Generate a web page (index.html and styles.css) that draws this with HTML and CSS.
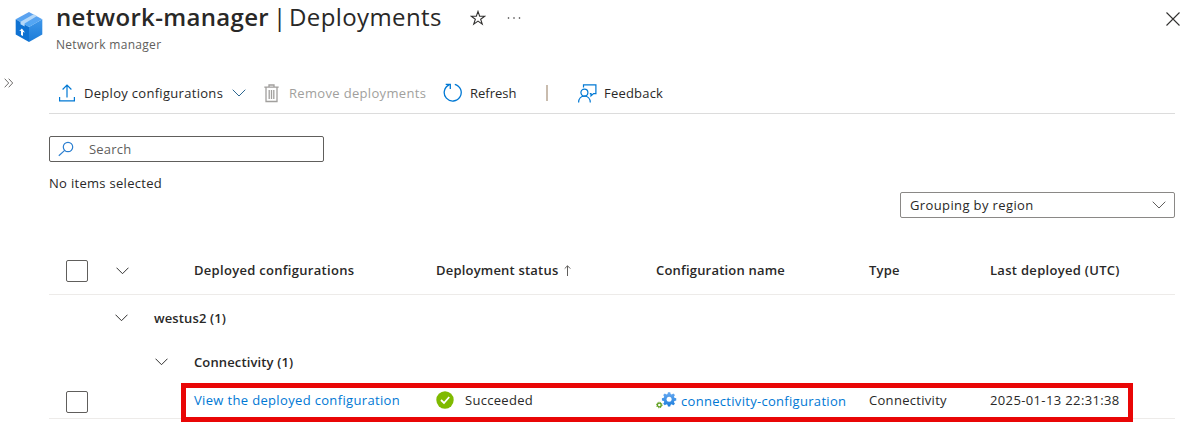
FILE: index.html
```
<!DOCTYPE html>
<html lang="en">
<head>
<meta charset="utf-8">
<title>network-manager | Deployments</title>
<link rel="stylesheet" href="styles.css">
</head>
<body>
<header class="header">
  <svg class="logo" width="28" height="32" viewBox="0 0 28 32">
    <defs>
      <linearGradient id="side" x1="0" y1="0" x2="0" y2="1"><stop offset="0" stop-color="#3f97ea"/><stop offset="1" stop-color="#1a7bd8"/></linearGradient>
      <linearGradient id="top" x1="0" y1="0" x2="0" y2="1"><stop offset="0" stop-color="#5ea0ef"/><stop offset="1" stop-color="#4fa8f5"/></linearGradient>
    </defs>
    <path fill="url(#top)" d="M14 1 27.300 8.300 14 16 .7 8.300z"/>
    <path fill="#0f72d2" d="M.7 8.300 14 16v15L.7 23.600z"/>
    <path fill="url(#side)" d="M27.300 8.300V23.600L14 31V16z"/>
    <path fill="#b5d8f8" d="m5.500 10.800 13.200-7.600 3.300 1.900-12.400 7.400v3l-4.100-2.300z"/>
    <path fill="#fff" d="m6.900 17.600 3 4-1.900-.7v4.100l-2-1.100v-4.100l-1.800.2z"/>
  </svg>
  <div class="heading">
    <div class="title-row">
      <h1 class="title"><span class="resource">network-manager</span><span class="bar">|</span><span class="page">Deployments</span></h1>
      <svg class="star" width="16" height="16" viewBox="0 0 16 16"><path fill="none" stroke="#323130" stroke-width="1.100" d="m8 1.400 1.650 4.800h5.100l-4.100 3 1.600 4.900L8 11.100l-4.250 3 1.600-4.900-4.100-3h5.100z"/></svg>
      <svg class="more" width="14" height="4" viewBox="0 0 14 4"><g fill="#323130"><circle cx="1.500" cy="2" r=".8"/><circle cx="7" cy="2" r=".8"/><circle cx="12.500" cy="2" r=".8"/></g></svg>
    </div>
    <div class="subtitle">Network manager</div>
  </div>
  <svg class="close" width="14" height="14" viewBox="0 0 14 14"><path stroke="#323130" stroke-width="1.100" d="m.5.5 13 13m0-13-13 13"/></svg>
</header>
<div class="body">
  <aside class="rail"><svg width="10" height="10" viewBox="0 0 10 10"><path fill="none" stroke="#605e5c" stroke-width=".9" d="m.7.7 4 4.300-4 4.300m4-8.600 4 4.300-4 4.300"/></svg></aside>
  <main class="main">
    <nav class="toolbar">
      <div class="command deploy">
        <svg width="16" height="18" viewBox="0 0 16 18"><path fill="none" stroke="#0078d4" stroke-width="1.200" d="M8 13.500V1.200M3.600 5.500 8 1.100l4.400 4.400M.6 13v3.800h14.800V13"/></svg>
        <span class="label">Deploy configurations</span>
        <svg class="chev" width="14" height="8" viewBox="0 0 14 8"><path fill="none" stroke="#2c6690" d="M.7.7 7 7 13.300.7"/></svg>
      </div>
      <div class="command remove">
        <svg width="15" height="19" viewBox="0 0 15 19"><path fill="none" stroke="#a19f9d" stroke-width="1.300" d="M.3 3.200h14.400M5 3V1h5v2M2 3.500v14h11v-14M5.200 6v9M7.500 6v9M9.800 6v9"/></svg>
        <span class="label">Remove deployments</span>
      </div>
      <div class="command refresh">
        <svg width="20" height="20" viewBox="0 0 20 20"><path fill="none" stroke="#0078d4" stroke-width="1.300" d="M11.800 1.300A8.500 8.500 0 1 1 6.200 1.800M2.700 1.300h4.600v4.600"/></svg>
        <span class="label">Refresh</span>
      </div>
      <span class="separator"></span>
      <div class="command feedback">
        <svg width="19" height="19" viewBox="0 0 19 19"><path fill="none" stroke="#0078d4" stroke-width="1.200" d="M5.500 3.500V.8h12.400v8.800h-2.300l-2.600 2.300V9.600h-1.200"/><circle cx="6.400" cy="8.600" r="3.500" fill="#fff" stroke="#0078d4" stroke-width="1.200"/><path fill="none" stroke="#0078d4" stroke-width="1.200" d="M.6 18.400c0-3.700 2.400-6.200 5.800-6.200s5.900 2.500 5.900 6.200"/></svg>
        <span class="label">Feedback</span>
      </div>
    </nav>
    <div class="search">
      <svg width="16" height="16" viewBox="0 0 16 16"><g fill="none" stroke="#2b7fd0" stroke-width="1.200"><circle cx="10" cy="6" r="4.700"/><path d="M6.700 9.400.8 14.700"/></g></svg>
      <span class="placeholder">Search</span>
    </div>
    <div class="selection">No items selected</div>
    <div class="grouping"><span class="grouping-label">Grouping by region</span><svg width="14" height="8" viewBox="0 0 14 8"><path fill="none" stroke="#605e5c" d="M.7.7 7 7 13.300.7"/></svg></div>
    <section class="table">
      <div class="row head">
        <span class="check"></span>
        <span><svg class="chev" width="13" height="8" viewBox="0 0 13 8"><path fill="none" stroke="#323130" d="M.5.700 6.500 6.700 12.500.7"/></svg></span>
        <span class="h-name">Deployed configurations</span>
        <span class="cell"><span class="h-status">Deployment status</span><svg class="sort" width="7" height="11" viewBox="0 0 7 11"><path fill="none" stroke="#605e5c" d="M3.500 11V.8M.7 3.600 3.500.8l2.800 2.800"/></svg></span>
        <span class="h-config">Configuration name</span>
        <span class="h-type">Type</span>
        <span class="h-date">Last deployed (UTC)</span>
      </div>
      <div class="group region">
        <svg width="13" height="8" viewBox="0 0 13 8"><path fill="none" stroke="#323130" d="M.5.700 6.500 6.700 12.500.7"/></svg>
        <span class="g-region">westus2 (1)</span>
      </div>
      <div class="group kind">
        <svg width="13" height="8" viewBox="0 0 13 8"><path fill="none" stroke="#323130" d="M.5.700 6.500 6.700 12.500.7"/></svg>
        <span class="g-kind">Connectivity (1)</span>
      </div>
      <div class="row data">
        <span class="check"></span>
        <span></span>
        <a class="link d-name">View the deployed configuration</a>
        <span class="cell status"><svg width="18" height="18" viewBox="0 0 18 18"><circle cx="9" cy="9" r="8.700" fill="#7fba00"/><path fill="none" stroke="#fff" stroke-width="1.800" d="m5 9 3 3 5.200-6"/></svg><span class="d-status">Succeeded</span></span>
        <span class="cell config">
          <svg width="21" height="18" viewBox="0 0 21 18">
            <defs><linearGradient id="gear" x1="0" y1="0" x2="0" y2="1"><stop offset="0" stop-color="#6aabf2"/><stop offset="1" stop-color="#1b7ddb"/></linearGradient></defs>
            <g fill="url(#gear)" transform="translate(.9 .2) scale(.93)"><path d="M11.900 0h2.400l.5 2 1.100.5 1.800-1.100 1.700 1.700-1.100 1.800.5 1.100 2 .5v2.400l-2 .5-.5 1.100 1.100 1.800-1.700 1.700-1.800-1.100-1.100.5-.5 1.900h-2.400l-.5-1.900-1.100-.5L8.500 14l-1.700-1.700 1.100-1.800-.5-1.100-2-.5V6.500l2-.5.5-1.100-1.100-1.800 1.700-1.700 1.800 1.100 1.100-.5z"/></g>
            <circle cx="13.100" cy="7.200" r="2.500" fill="#fff"/>
            <circle cx="3.300" cy="13" r="3.700" fill="#fff"/>
            <circle cx="3.300" cy="13" r="1.900" fill="none" stroke="#5e9e1d" stroke-width="1.300"/>
            <circle cx="3.300" cy="13" r="2.800" fill="none" stroke="#5e9e1d" stroke-width="1" stroke-dasharray="1.100 1.100"/>
          </svg><a class="link d-config">connectivity-configuration</a></span>
        <span class="d-type">Connectivity</span>
        <span class="d-date">2025-01-13 22:31:38</span>
        <span class="highlight"></span>
      </div>
    </section>
  </main>
</div>
</body>
</html>
```
FILE: styles.css
```
* { box-sizing: border-box; }
body { margin: 0; width: 1187px; height: 434px; overflow: hidden; background: #fff; color: #292827; font: 13px/20px "Open Sans", "Noto Sans", sans-serif; white-space: nowrap; letter-spacing: .3px; }
svg { display: block; flex: none; }
.header { display: flex; align-items: flex-start; height: 73px; padding-right: 7px; }
.logo { margin: 11px 13px 0 15px; }
.heading { flex: 1; }
.title-row { display: flex; height: 36px; }
.title { display: flex; margin: 0; font-size: 24px; line-height: 34px; font-weight: 400; letter-spacing: .4px; }
.resource { width: 217px; font-weight: 600; letter-spacing: .33px; }
.bar { width: 16px; }
.page { width: 181px; }
.star { margin-top: 10px; }
.more { margin: 16px 0 0 21px; }
.subtitle { font-size: 12px; line-height: 18px; color: #605e5c; }
.close { margin-top: 12px; }
.body { display: flex; }
.rail { width: 49px; padding: 5px 0 0 4px; }
.main { width: 1126px; }
.toolbar { display: flex; align-items: center; height: 41px; border-bottom: 1px solid #dcdcdc; }
.command { display: flex; align-items: center; }
.deploy { width: 215px; padding-left: 10px; }
.deploy .label { margin-left: 9px; width: 148px; }
.remove { width: 179px; color: #a19f9d; }
.remove .label { margin-left: 10px; letter-spacing: .33px; }
.refresh { width: 103px; }
.refresh .label { margin-left: 7px; letter-spacing: 0; }
.separator { width: 2px; height: 16px; margin-right: 30px; background: #c9bcae; }
.feedback .label { margin-left: 7px; letter-spacing: .2px; }
.search { display: flex; align-items: center; width: 275px; height: 26px; margin-top: 22px; padding-left: 8px; border: 1px solid #605e5c; border-radius: 2px; color: #605e5c; }
.placeholder { margin-left: 15px; letter-spacing: .2px; }
.selection { margin-top: 11px; height: 19px; }
.grouping { display: flex; align-items: center; justify-content: space-between; width: 275px; height: 26px; margin: 0 0 0 auto; padding: 0 8px 0 9px; border: 1px solid #8a8886; border-radius: 2px; letter-spacing: .38px; }
.table { margin-top: 29px; }
.row { display: grid; grid-template-columns: 67px 78px 242px 220px 213px 121px 1fr; align-items: center; position: relative; }
.head { height: 48px; border-bottom: 1px solid #edebe9; font-weight: 600; }
.h-name, .h-config, .h-status, .h-type, .h-date { padding-bottom: 2px; }
.h-status, .h-config, .h-type { letter-spacing: .2px; }
.check { width: 22px; height: 22px; margin-left: 17px; border: 1px solid #605e5c; border-radius: 2px; }
.cell { display: flex; align-items: center; }
.sort { margin-left: 6px; }
.group { display: flex; align-items: center; font-weight: 600; letter-spacing: .13px; }
.group svg { margin-right: 26px; }
.region { height: 46px; padding-left: 66px; }
.kind { height: 42px; padding-left: 106px; }
.data { height: 36px; border-bottom: 1px solid #edebe9; }
.data .check { margin-top: 2px; }
.d-name, .d-type, .d-date, .status { padding-bottom: 2px; }
.d-name { letter-spacing: .34px; }
.d-date { letter-spacing: .37px; }
.d-status { margin-left: 11px; }
.d-config { margin-left: 4px; }
.link { color: #0078d4; }
.highlight { position: absolute; left: 132px; top: 0; width: 952px; height: 39px; border: 5px solid #e90606; }
```
